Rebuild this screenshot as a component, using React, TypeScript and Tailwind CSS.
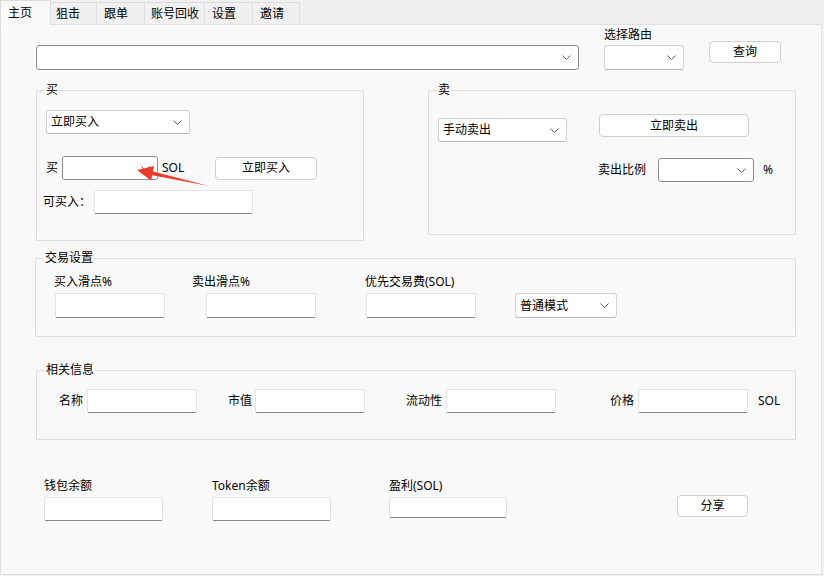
import React from "react";

const Chevron = () => (
  <svg width="9" height="5" viewBox="0 0 9 5" className="shrink-0">
    <path d="M0.5 0.5 L4.5 4.5 L8.5 0.5" fill="none" stroke="#5f5f5f" strokeWidth="1" />
  </svg>
);

function Combo({ text, className, dark }: { text?: string; className: string; dark?: boolean }) {
  return (
    <div
      className={
        "flex items-center justify-between bg-white rounded-[3px] pl-[4px] pr-[7px] " +
        (dark ? "border border-[#8c8c8c] " : "border border-[#d4d4d4] border-b-[#b8b8b8] ") +
        className
      }
    >
      <span className="leading-[16px]">{text}</span>
      <Chevron />
    </div>
  );
}

function Input({ className }: { className: string }) {
  return (
    <div className={"bg-white rounded-[2px] border border-[#e2e2e2] border-b-[#868686] " + className} />
  );
}

function Btn({ text, className }: { text: string; className: string }) {
  return (
    <div
      className={
        "flex items-center justify-center bg-[#fdfdfd] border border-[#d0d0d0] rounded-[4px] leading-[16px] " +
        className
      }
    >
      {text}
    </div>
  );
}

function Group({ title, className, children }: { title: string; className: string; children?: React.ReactNode }) {
  return (
    <div className={"relative border border-[#dcdcdc] rounded-[2px] " + className}>
      <span className="absolute -top-[9px] left-[8px] bg-[#f9f9f9] px-[1px] leading-[16px]">{title}</span>
      {children}
    </div>
  );
}

export default function App() {
  const tabs = [
    { t: "狙击", c: "w-[46px] pl-[5px]" },
    { t: "跟单", c: "w-[48px] pl-[7px]" },
    { t: "账号回收", c: "w-[60px] pl-[6px]" },
    { t: "设置", c: "w-[48px] pl-[7px]" },
    { t: "邀请", c: "w-[47px] pl-[7px]" },
  ];
  return (
    <div className="relative w-[824px] h-[576px] bg-[#f0f0f0] overflow-hidden text-[12px] text-[#000] font-['Noto_Sans','Noto_Sans_CJK_SC',sans-serif]">
      {/* tab strip */}
      <div className="flex items-end h-[24px]">
        <div className="relative z-10 w-[51px] h-[25px] -mb-px bg-[#f9f9f9] border-l border-r border-t border-[#dcdcdc] pl-[7px] pt-[4px] leading-[16px]">
          主页
        </div>
        {tabs.map((tab) => (
          <div
            key={tab.t}
            className={
              "h-[22px] bg-[#f0f0f0] border-t border-r border-[#dcdcdc] flex items-center justify-start leading-[16px] pt-[1px] " +
              tab.c
            }
          >
            {tab.t}
          </div>
        ))}
      </div>

      {/* panel */}
      <div className="w-[822px] h-[551px] bg-[#f9f9f9] border border-[#e0e0e0] flex flex-col">
        {/* row 1 */}
        <div className="flex items-start pl-[35px]">
          <Combo className="mt-[20px] w-[543px] h-[25px]" dark />
          <div className="ml-[25px] flex flex-col">
            <span className="mt-[2px] leading-[16px]">选择路由</span>
            <Combo className="mt-[2px] w-[80px] h-[25px]" />
          </div>
          <Btn text="查询" className="ml-[25px] mt-[16px] w-[72px] h-[22px]" />
        </div>

        {/* row 2: buy / sell */}
        <div className="flex items-start pl-[35px] mt-[20px]">
          <Group title="买" className="w-[328px] h-[151px]">
            <div className="flex flex-col">
              <Combo text="立即买入" className="ml-[9px] mt-[19px] w-[144px] h-[24px]" />
              <div className="flex items-center mt-[22px] h-[24px]">
                <span className="ml-[9px] w-[16px]">买</span>
                <Combo className="w-[96px] h-[24px]" dark />
                <span className="ml-[4px] w-[53px]">SOL</span>
                <Btn text="立即买入" className="w-[102px] h-[23px]" />
              </div>
              <div className="flex items-center mt-[10px] h-[24px]">
                <span className="ml-[6px] w-[51px]">可买入：</span>
                <Input className="w-[159px] h-[24px]" />
              </div>
            </div>
          </Group>
          <Group title="卖" className="ml-[64px] w-[368px] h-[145px]">
            <div className="flex flex-col">
              <div className="flex items-start h-[51px]">
                <Combo text="手动卖出" className="ml-[9px] mt-[27px] w-[129px] h-[24px]" />
                <Btn text="立即卖出" className="ml-[32px] mt-[23px] w-[150px] h-[23px]" />
              </div>
              <div className="flex items-center mt-[16px] h-[24px]">
                <span className="ml-[169px] w-[60px]">卖出比例</span>
                <Combo className="w-[96px] h-[24px]" dark />
                <span className="ml-[9px]">%</span>
              </div>
            </div>
          </Group>
        </div>

        {/* 交易设置 */}
        <Group title="交易设置" className="ml-[34px] mt-[17px] w-[761px] h-[79px]">
          <div className="flex items-start">
            <div className="ml-[18px] flex flex-col">
              <span className="mt-[15px] leading-[16px]">买入滑点%</span>
              <Input className="ml-[1px] mt-[3px] w-[110px] h-[25px]" />
            </div>
            <div className="ml-[27px] flex flex-col">
              <span className="mt-[15px] leading-[16px]">卖出滑点%</span>
              <Input className="ml-[14px] mt-[3px] w-[110px] h-[25px]" />
            </div>
            <div className="ml-[49px] flex flex-col">
              <span className="mt-[15px] leading-[16px]">优先交易费(SOL)</span>
              <Input className="ml-[1px] mt-[3px] w-[110px] h-[25px]" />
            </div>
            <Combo text="普通模式" className="ml-[39px] mt-[34px] w-[102px] h-[25px]" />
          </div>
        </Group>

        {/* 相关信息 */}
        <Group title="相关信息" className="ml-[35px] mt-[33px] w-[760px] h-[70px]">
          <div className="flex items-center mt-[18px] h-[24px]">
            <span className="ml-[22px] w-[28px]">名称</span>
            <Input className="w-[110px] h-[24px]" />
            <span className="ml-[31px] w-[27px]">市值</span>
            <Input className="w-[110px] h-[24px]" />
            <span className="ml-[41px] w-[40px]">流动性</span>
            <Input className="w-[110px] h-[24px]" />
            <span className="ml-[54px] w-[28px]">价格</span>
            <Input className="w-[110px] h-[24px]" />
            <span className="ml-[10px]">SOL</span>
          </div>
        </Group>

        {/* bottom row */}
        <div className="flex items-start ml-[43px] mt-[38px]">
          <div className="flex flex-col">
            <span className="leading-[16px]">钱包余额</span>
            <Input className="mt-[3px] w-[119px] h-[24px]" />
          </div>
          <div className="ml-[49px] flex flex-col">
            <span className="leading-[16px]">Token余额</span>
            <Input className="mt-[3px] w-[119px] h-[24px]" />
          </div>
          <div className="ml-[58px] flex flex-col">
            <span className="leading-[16px]">盈利(SOL)</span>
            <Input className="mt-[3px] w-[118px] h-[21px]" />
          </div>
          <Btn text="分享" className="ml-[170px] mt-[17px] w-[71px] h-[22px]" />
        </div>
      </div>

      {/* red annotation arrow */}
      <svg className="absolute left-0 top-0 pointer-events-none" width="824" height="576">
        <polygon
          points="137,170 154,166 153,171.5 209,186 152.3,175.3 151,180.5"
          fill="#ee3a2c"
        />
      </svg>
    </div>
  );
}
